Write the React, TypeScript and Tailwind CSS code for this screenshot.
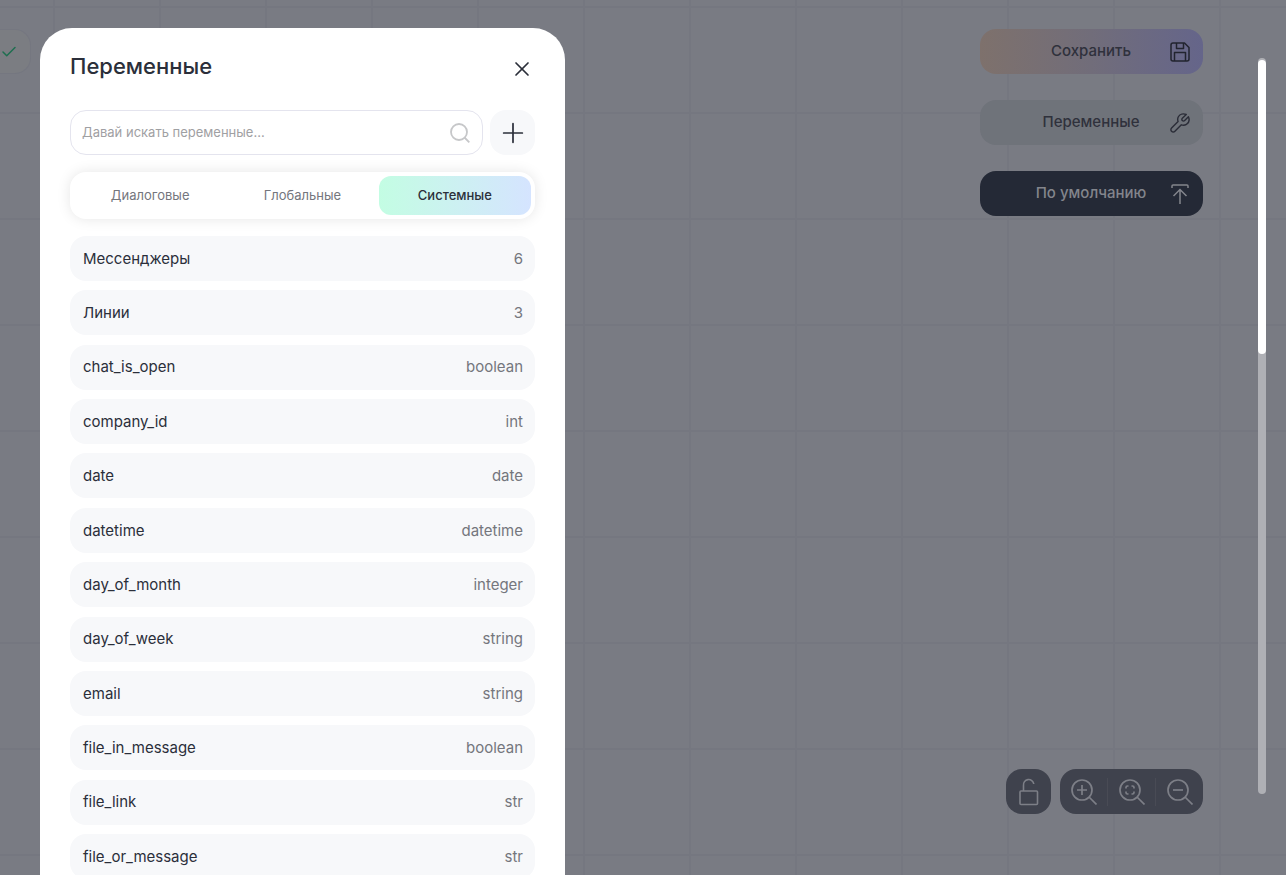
import { useState } from 'react'
import { Check, Plus, X } from 'lucide-react'

const variables = [
  { name: 'Мессенджеры', type: '6' },
  { name: 'Линии', type: '3' },
  { name: 'chat_is_open', type: 'boolean' },
  { name: 'company_id', type: 'int' },
  { name: 'date', type: 'date' },
  { name: 'datetime', type: 'datetime' },
  { name: 'day_of_month', type: 'integer' },
  { name: 'day_of_week', type: 'string' },
  { name: 'email', type: 'string' },
  { name: 'file_in_message', type: 'boolean' },
  { name: 'file_link', type: 'str' },
  { name: 'file_or_message', type: 'str' },
]

const tabs = ['Диалоговые', 'Глобальные', 'Системные']

function SearchIcon() {
  return (
    <svg width="20" height="20" viewBox="0 0 20 20" fill="none" stroke="#c6c7c9" strokeWidth="1.8">
      <circle cx="9" cy="9" r="8" />
      <path d="M14.500 14.500l4.800 4.800" />
    </svg>
  )
}

function SaveIcon() {
  return (
    <svg width="20" height="20" viewBox="0 0 20 20" fill="none" stroke="#22242f" strokeWidth="1.5" strokeLinejoin="round">
      <path d="M3 1h11.5L19 5.5V17a2 2 0 0 1-2 2H3a2 2 0 0 1-2-2V3a2 2 0 0 1 2-2z" />
      <path d="M6.5 1v5.5h7V1M4.5 19v-8.500h11V19" />
    </svg>
  )
}

function WrenchIcon() {
  return (
    <svg width="20" height="20" viewBox="0 0 24 24" fill="none" stroke="#2b2d38" strokeWidth="1.7" strokeLinejoin="round">
      <path d="M19.500 1.800C16 .2 12 1.200 10.200 4.200 9 6.200 9 8.300 9.700 10.300L1.900 18a2.700 2.700 0 0 0 0 3.900 2.700 2.700 0 0 0 4 0l7.700-7.700c2 .7 4.200.6 6.100-.6 3-1.900 3.900-5.700 2.400-9.100l-4.500 4.600c-.8.8-2 .8-2.800 0s-.8-2 0-2.800z" />
    </svg>
  )
}

function UploadIcon() {
  return (
    <svg width="20" height="22" viewBox="0 0 20 22" fill="none" stroke="#83858c" strokeWidth="1.5">
      <path d="M2 5V3a1 1 0 0 1 1-1h14a1 1 0 0 1 1 1v2M10 21V7M3.500 13L10 6.500l6.500 6.500" />
    </svg>
  )
}

function UnlockIcon() {
  return (
    <svg width="20" height="28" viewBox="1 0 20 28" fill="none" stroke="#7d7f87" strokeWidth="1.6">
      <rect x="2" y="13" width="17.500" height="13.500" rx="1" />
      <path d="M5.500 13V7.500a5.200 5.200 0 0 1 10.300-1.500" />
    </svg>
  )
}

function ZoomIcon({ kind }: { kind: 'in' | 'fit' | 'out' }) {
  return (
    <svg width="26" height="26" viewBox="0 0 26 26" fill="none" stroke="#7d7f87" strokeWidth="1.7">
      <circle cx="11" cy="11" r="10" />
      <path d="M18 18l7.500 7.500" />
      {kind === 'in' && <path d="M6 11h10M11 6v10" />}
      {kind === 'out' && <path d="M6 11h10" />}
      {kind === 'fit' && (
        <path d="M7 9.500V8.500A1.500 1.500 0 0 1 8.500 7H9.500M12.500 7H13.500A1.500 1.500 0 0 1 15 8.500V9.500M15 12.500V13.500A1.500 1.500 0 0 1 13.500 15H12.500M9.500 15H8.500A1.500 1.500 0 0 1 7 13.500V12.500" />
      )}
    </svg>
  )
}

export default function App() {
  const [activeTab, setActiveTab] = useState('Системные')
  const [query, setQuery] = useState('')

  return (
    <div className="flex h-screen overflow-hidden bg-[#797b83] bg-[linear-gradient(to_right,#757780_2px,transparent_2px),linear-gradient(to_bottom,#757780_2px,transparent_2px)] bg-[size:106px_106px] bg-[position:53px_6px] font-['Inter',sans-serif] text-[#2b2f3a]">
      <button
        aria-label="Готово"
        className="mt-[29px] flex h-[45px] w-[31px] shrink-0 items-center rounded-r-2xl border border-l-0 border-[#757780] bg-[#7b7d82]"
      >
        <Check size={18} strokeWidth={2} className="text-[#1f6f50]" />
      </button>

      {/* Variables drawer */}
      <aside className="mt-7 ml-[9px] w-[525px] shrink-0 rounded-t-[32px] bg-white px-[30px]">
        <header className="flex h-[82px] items-start justify-between pt-[22px] pr-px">
          <h1 className="text-[22px] leading-8 font-medium">Переменные</h1>
          <button aria-label="Закрыть" className="mt-[7px]">
            <X size={24} strokeWidth={1.7} />
          </button>
        </header>

        <div className="flex gap-[7px]">
          <label className="flex h-[45px] flex-1 items-center rounded-2xl border border-[#e4e4ee] pr-3 pl-[11px]">
            <input
              type="text"
              aria-label="Поиск"
              value={query}
              onChange={(e) => setQuery(e.target.value)}
              placeholder="Давай искать переменные..."
              className="min-w-0 flex-1 pt-px text-[13px] outline-none placeholder:text-[#9fa0a3]"
            />
            <SearchIcon />
          </label>
          <button aria-label="Добавить" className="flex size-[45px] items-center justify-center rounded-2xl bg-[#f7f8fa]">
            <Plus size={32} strokeWidth={1.3} />
          </button>
        </div>

        <div role="tablist" className="mt-[17px] flex h-[47px] rounded-2xl bg-white p-1 shadow-[0_0_14px_rgba(0,0,0,0.1)]">
          {tabs.map((tab) => (
            <button
              key={tab}
              role="tab"
              aria-selected={tab === activeTab}
              onClick={() => setActiveTab(tab)}
              className={`flex-1 rounded-xl text-[13px] ${
                tab === activeTab
                  ? 'bg-linear-to-r from-[#c3fde3] to-[#d5e4ff] font-medium'
                  : 'text-[#74767d]'
              }`}
            >
              {tab}
            </button>
          ))}
        </div>

        <ul className="mt-[17px] flex min-h-[643px] flex-col justify-between text-[15px]">
          {variables.map((v) => (
            <li key={v.name}>
              <button className="flex h-[45px] w-full items-center justify-between rounded-2xl bg-[#f7f8fa] pt-px pr-3 pl-[13px]">
                <span>{v.name}</span>
                <span className="text-[#74767d]">{v.type}</span>
              </button>
            </li>
          ))}
        </ul>
      </aside>

      {/* Canvas actions */}
      <div className="mr-[55px] ml-auto flex w-[223px] shrink-0 flex-col justify-between pt-[29px] pb-[61px]">
        <div className="flex flex-col gap-[26px] text-[15px] font-medium">
          <button className="flex h-[45px] items-center rounded-2xl bg-linear-to-r from-[#7e716c] via-[#716d7a] to-[#65658a] pr-[13px] pl-[32px] text-[#2f313c]">
            <span className="flex-1">Сохранить</span>
            <SaveIcon />
          </button>
          <button className="flex h-[45px] items-center rounded-2xl bg-[#6f737a] pr-[13px] pl-[32px] text-[#2f313c]">
            <span className="flex-1">Переменные</span>
            <WrenchIcon />
          </button>
          <button className="flex h-[45px] items-center rounded-2xl bg-[#242936] pr-[13px] pl-[32px] text-[#83858c]">
            <span className="flex-1">По умолчанию</span>
            <UploadIcon />
          </button>
        </div>

        <div className="flex justify-end gap-[9px]">
          <button aria-label="Разблокировать" className="flex size-[45px] items-center justify-center rounded-2xl bg-[#3f424d]">
            <UnlockIcon />
          </button>
          <div className="flex h-[45px] w-[143px] items-center divide-x divide-[#494b55] rounded-2xl bg-[#3f424d]">
            <button aria-label="Приблизить" className="flex h-7 flex-1 items-center justify-center">
              <ZoomIcon kind="in" />
            </button>
            <button aria-label="Вписать" className="flex h-7 flex-1 items-center justify-center">
              <ZoomIcon kind="fit" />
            </button>
            <button aria-label="Отдалить" className="flex h-7 flex-1 items-center justify-center">
              <ZoomIcon kind="out" />
            </button>
          </div>
        </div>
      </div>

      {/* Scroll track */}
      <div className="mt-[58px] mr-5 mb-[81px] w-2 shrink-0 rounded-full bg-[#afb0b5] pt-[2px]">
        <div className="h-2/5 rounded-full bg-white" />
      </div>
    </div>
  )
}
